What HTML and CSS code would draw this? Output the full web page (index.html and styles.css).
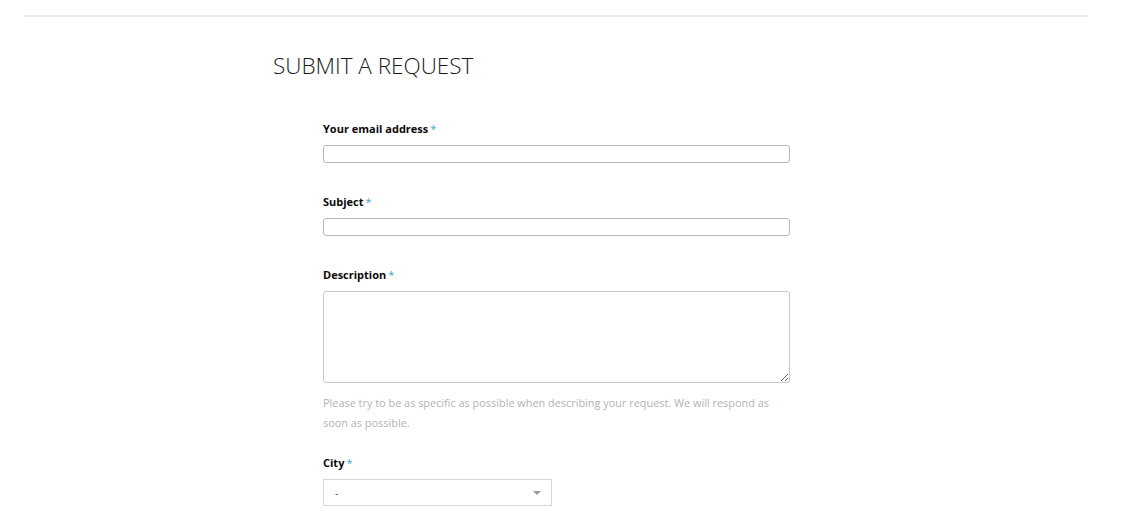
FILE: index.html
```html
<!DOCTYPE html>
<html>
<head>
<meta charset="utf-8">
<link rel="stylesheet" href="styles.css">
</head>
<body>
<div class="topbar"></div>
<main class="page">
  <h1 class="title">SUBMIT A REQUEST</h1>
  <form class="form">
    <div class="field">
      <label class="label">Your email address<span class="req">*</span></label>
      <input class="input" type="text">
    </div>
    <div class="field">
      <label class="label">Subject<span class="req">*</span></label>
      <input class="input" type="text">
    </div>
    <div class="field field-desc">
      <label class="label">Description<span class="req">*</span></label>
      <textarea class="textarea"></textarea>
      <p class="hint">Please try to be as specific as possible when describing your request. We will respond as soon as possible.</p>
    </div>
    <div class="field">
      <label class="label">City<span class="req">*</span></label>
      <div class="select">
        <span class="select-value">-</span>
        <span class="caret"></span>
      </div>
    </div>
  </form>
</main>
</body>
</html>
```

FILE: styles.css
```css
html, body {
  margin: 0;
  padding: 0;
  background: #fff;
  font-family: "Open Sans", "DejaVu Sans", sans-serif;
  color: #222;
}
.topbar {
  margin: 15px 0 0 24px;
  width: 1064px;
  height: 0;
  border-top: 2px solid #ececec;
}
.page {
  padding-left: 273px;
}
.title {
  margin: 33px 0 0 0;
  font-weight: 300;
  font-size: 22.5px;
  line-height: 32px;
  color: #1a1a1a;
}
.form {
  margin: 39px 0 0 50px;
  width: 467px;
}
.field {
  margin-bottom: 31px;
}
.label {
  display: block;
  font-weight: 700;
  font-size: 11px;
  line-height: 15px;
  color: #0a0a0a;
  margin-bottom: 9px;
}
.req {
  color: #3aa9c4;
  margin-left: 2px;
  font-weight: 400;
}
.input {
  display: block;
  box-sizing: border-box;
  width: 467px;
  height: 18px;
  border: 1px solid #b9b9b9;
  border-radius: 3px;
  margin: 0;
  padding: 0 4px;
  background: #fff;
}
.textarea {
  display: block;
  box-sizing: border-box;
  width: 467px;
  height: 92px;
  border: 1px solid #c9c9c9;
  border-radius: 3px;
  margin: 0;
  resize: vertical;
}
.hint {
  margin: 10px 0 0 0;
  font-size: 10.9px;
  line-height: 20px;
  color: #b3b3b3;
}
.field-desc {
  margin-bottom: 22px;
}
.select {
  box-sizing: border-box;
  width: 229px;
  height: 27px;
  border: 1px solid #d6d6d6;
  display: flex;
  align-items: center;
  justify-content: space-between;
  padding: 0 10px 0 11px;
  font-size: 11px;
  color: #555;
}
.caret {
  width: 0;
  height: 0;
  border-left: 4px solid transparent;
  border-right: 4px solid transparent;
  border-top: 4px solid #999;
}
```
